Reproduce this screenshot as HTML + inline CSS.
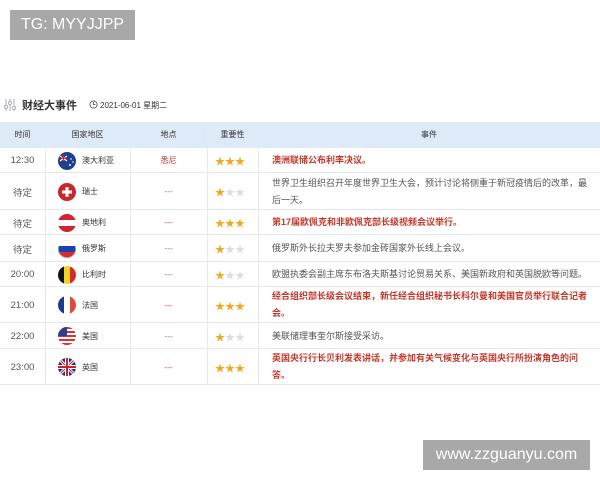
<!DOCTYPE html>
<html><head><meta charset="utf-8">
<style>
*{margin:0;padding:0;box-sizing:border-box}
body{width:600px;height:480px;background:#fff;position:relative;overflow:hidden;font-family:"Liberation Sans","Noto Sans CJK SC",sans-serif;color:#444}
.abs{position:absolute}
.tg{left:10px;top:10px;width:125px;height:30px;background:#a8a8a8;color:#fff;font-size:16px;line-height:30px;text-align:center;font-family:"Liberation Sans",sans-serif}
.wm{left:423px;top:440px;width:167px;height:30px;background:#a8a8a8;color:#fff;font-size:16px;line-height:30px;text-align:center}
.title{left:22px;top:97px;font-size:11px;font-weight:bold;color:#333}
.date{left:100px;top:100px;font-size:8px;color:#333}
.hdr{left:0;top:122px;width:600px;height:26px;background:#dfeaf8}
.hc{position:absolute;top:122px;height:26px;line-height:26px;font-size:8px;color:#333;text-align:center}
.row{position:absolute;left:0;width:600px;border-bottom:1px solid #e3e8f0}
.vl{position:absolute;top:122px;height:263px;width:1px;background:#e6ebf3}
.cell{position:absolute;font-size:8px;display:flex;align-items:center}
.t{left:0;width:45px;justify-content:center;color:#555;font-size:9.5px}
.c{left:58px;width:72px}
.c span{margin-left:6px;color:#333}
.p{left:130px;width:77px;justify-content:center;color:#777}
.pr{color:#c0392b}
.s{left:215px;width:40px;font-size:10px}
.e{left:272px;width:318px;line-height:17px;font-size:9px;color:#555}
.red{color:#c0392b;font-weight:bold}
.y{color:#f3a81e}.g{color:#ddd}
svg.f{width:18px;height:18px;flex:none}
</style></head><body>
<div class="abs tg">TG: MYYJJPP</div>
<svg class="abs" style="left:3px;top:98px" width="14" height="14" viewBox="0 0 14 14" fill="none" stroke="#aab" stroke-width="1"><line x1="3" y1="1" x2="3" y2="13"/><line x1="7" y1="1" x2="7" y2="13"/><line x1="11" y1="1" x2="11" y2="13"/><circle cx="3" cy="9" r="1.6" fill="#fff"/><circle cx="7" cy="5" r="1.6" fill="#fff"/><circle cx="11" cy="10" r="1.6" fill="#fff"/></svg>
<div class="abs title">财经大事件</div>
<svg class="abs" style="left:89px;top:100px" width="9" height="9" viewBox="0 0 10 10" fill="none" stroke="#555" stroke-width="1"><circle cx="5" cy="5" r="4"/><path d="M5 2.5V5h2"/></svg>
<div class="abs date">2021-06-01 星期二</div>
<div class="abs hdr"></div>
<div class="hc" style="left:0;width:45px">时间</div>
<div class="hc" style="left:45px;width:85px">国家地区</div>
<div class="hc" style="left:130px;width:77px">地点</div>
<div class="hc" style="left:207px;width:51px">重要性</div>
<div class="hc" style="left:258px;width:342px">事件</div>
<div class="vl" style="left:45px"></div><div class="vl" style="left:130px"></div><div class="vl" style="left:207px"></div><div class="vl" style="left:258px"></div>

<div class="row" style="top:148px;height:25px"></div>
<div class="row" style="top:173px;height:37px"></div>
<div class="row" style="top:210px;height:25px"></div>
<div class="row" style="top:235px;height:27px"></div>
<div class="row" style="top:262px;height:25px"></div>
<div class="row" style="top:287px;height:36px"></div>
<div class="row" style="top:323px;height:26px"></div>
<div class="row" style="top:349px;height:36px"></div>

<div class="cell t" style="top:148px;height:25px">12:30</div>
<div class="cell c" style="top:148px;height:25px"><svg class="f" viewBox="0 0 18 18"><circle cx="9" cy="9" r="9" fill="#1f3f8f"/><rect x="2" y="3" width="7" height="6" fill="#1f3f8f"/><path d="M2 4l7 5M9 4l-7 5" stroke="#fff" stroke-width="1.2"/><path d="M5.5 3v6M2 6h7" stroke="#d22" stroke-width="1.2"/><circle cx="13" cy="7" r=".8" fill="#fff"/><circle cx="12" cy="13" r="1" fill="#fff"/><circle cx="15" cy="10" r=".7" fill="#fff"/></svg><span>澳大利亚</span></div>
<div class="cell p pr" style="top:148px;height:25px">悉尼</div>
<div class="cell s" style="top:148px;height:25px"><span class="y">★★★</span></div>
<div class="cell e red" style="top:148px;height:25px">澳洲联储公布利率决议。</div>

<div class="cell t" style="top:173px;height:37px">待定</div>
<div class="cell c" style="top:173px;height:37px"><svg class="f" viewBox="0 0 18 18"><circle cx="9" cy="9" r="9" fill="#c8262c"/><path d="M7.5 4h3v3.5H14v3h-3.5V14h-3v-3.5H4v-3h3.5z" fill="#fff"/></svg><span>瑞士</span></div>
<div class="cell p" style="top:173px;height:37px">---</div>
<div class="cell s" style="top:173px;height:37px"><span class="y">★</span><span class="g">★★</span></div>
<div class="cell e" style="top:173px;height:37px">世界卫生组织召开年度世界卫生大会，预计讨论将侧重于新冠疫情后的改革，最后一天。</div>

<div class="cell t" style="top:210px;height:25px">待定</div>
<div class="cell c" style="top:210px;height:25px"><svg class="f" viewBox="0 0 18 18"><clipPath id="a"><circle cx="9" cy="9" r="9"/></clipPath><g clip-path="url(#a)"><rect width="18" height="6" fill="#d0252c"/><rect y="6" width="18" height="6" fill="#fff"/><rect y="12" width="18" height="6" fill="#d0252c"/></g></svg><span>奥地利</span></div>
<div class="cell p pr" style="top:210px;height:25px">---</div>
<div class="cell s" style="top:210px;height:25px"><span class="y">★★★</span></div>
<div class="cell e red" style="top:210px;height:25px">第17届欧佩克和非欧佩克部长级视频会议举行。</div>

<div class="cell t" style="top:235px;height:27px">待定</div>
<div class="cell c" style="top:235px;height:27px"><svg class="f" viewBox="0 0 18 18"><clipPath id="b"><circle cx="9" cy="9" r="9"/></clipPath><g clip-path="url(#b)"><rect width="18" height="6" fill="#fff"/><rect y="6" width="18" height="6" fill="#1c3fb0"/><rect y="12" width="18" height="6" fill="#d52b2b"/></g><circle cx="9" cy="9" r="8.6" fill="none" stroke="#ddd" stroke-width=".5"/></svg><span>俄罗斯</span></div>
<div class="cell p" style="top:235px;height:27px">---</div>
<div class="cell s" style="top:235px;height:27px"><span class="y">★</span><span class="g">★★</span></div>
<div class="cell e" style="top:235px;height:27px">俄罗斯外长拉夫罗夫参加金砖国家外长线上会议。</div>

<div class="cell t" style="top:262px;height:25px">20:00</div>
<div class="cell c" style="top:262px;height:25px"><svg class="f" viewBox="0 0 18 18"><clipPath id="c"><circle cx="9" cy="9" r="9"/></clipPath><g clip-path="url(#c)"><rect width="6" height="18" fill="#111"/><rect x="6" width="6" height="18" fill="#f5d326"/><rect x="12" width="6" height="18" fill="#d72a2a"/></g></svg><span>比利时</span></div>
<div class="cell p" style="top:262px;height:25px">---</div>
<div class="cell s" style="top:262px;height:25px"><span class="y">★</span><span class="g">★★</span></div>
<div class="cell e" style="top:262px;height:25px;width:330px">欧盟执委会副主席东布洛夫斯基讨论贸易关系、美国新政府和英国脱欧等问题。</div>

<div class="cell t" style="top:287px;height:36px">21:00</div>
<div class="cell c" style="top:287px;height:36px"><svg class="f" viewBox="0 0 18 18"><clipPath id="d"><circle cx="9" cy="9" r="9"/></clipPath><g clip-path="url(#d)"><rect width="6" height="18" fill="#1f3a8a"/><rect x="6" width="6" height="18" fill="#fff"/><rect x="12" width="6" height="18" fill="#e04a3a"/></g></svg><span>法国</span></div>
<div class="cell p pr" style="top:287px;height:36px">---</div>
<div class="cell s" style="top:287px;height:36px"><span class="y">★★★</span></div>
<div class="cell e red" style="top:287px;height:36px">经合组织部长级会议结束，新任经合组织秘书长科尔曼和美国官员举行联合记者会。</div>

<div class="cell t" style="top:323px;height:26px">22:00</div>
<div class="cell c" style="top:323px;height:26px"><svg class="f" viewBox="0 0 18 18"><clipPath id="e"><circle cx="9" cy="9" r="9"/></clipPath><g clip-path="url(#e)"><rect width="18" height="18" fill="#fff"/><g fill="#d2343a"><rect y="0" width="18" height="2"/><rect y="4" width="18" height="2"/><rect y="8" width="18" height="2"/><rect y="12" width="18" height="2"/><rect y="16" width="18" height="2"/></g><rect width="9" height="9" fill="#2a3f8f"/></g></svg><span>美国</span></div>
<div class="cell p" style="top:323px;height:26px">---</div>
<div class="cell s" style="top:323px;height:26px"><span class="y">★</span><span class="g">★★</span></div>
<div class="cell e" style="top:323px;height:26px">美联储理事奎尔斯接受采访。</div>

<div class="cell t" style="top:349px;height:36px">23:00</div>
<div class="cell c" style="top:349px;height:36px"><svg class="f" viewBox="0 0 18 18"><clipPath id="g"><circle cx="9" cy="9" r="9"/></clipPath><g clip-path="url(#g)"><rect width="18" height="18" fill="#23307a"/><path d="M0 0L18 18M18 0L0 18" stroke="#fff" stroke-width="3"/><path d="M0 0L18 18M18 0L0 18" stroke="#c8202c" stroke-width="1"/><path d="M9 0v18M0 9h18" stroke="#fff" stroke-width="4"/><path d="M9 0v18M0 9h18" stroke="#c8202c" stroke-width="2"/></g></svg><span>英国</span></div>
<div class="cell p pr" style="top:349px;height:36px">---</div>
<div class="cell s" style="top:349px;height:36px"><span class="y">★★★</span></div>
<div class="cell e red" style="top:349px;height:36px">英国央行行长贝利发表讲话，并参加有关气候变化与英国央行所扮演角色的问答。</div>

<div class="abs wm">www.zzguanyu.com</div>
</body></html>
